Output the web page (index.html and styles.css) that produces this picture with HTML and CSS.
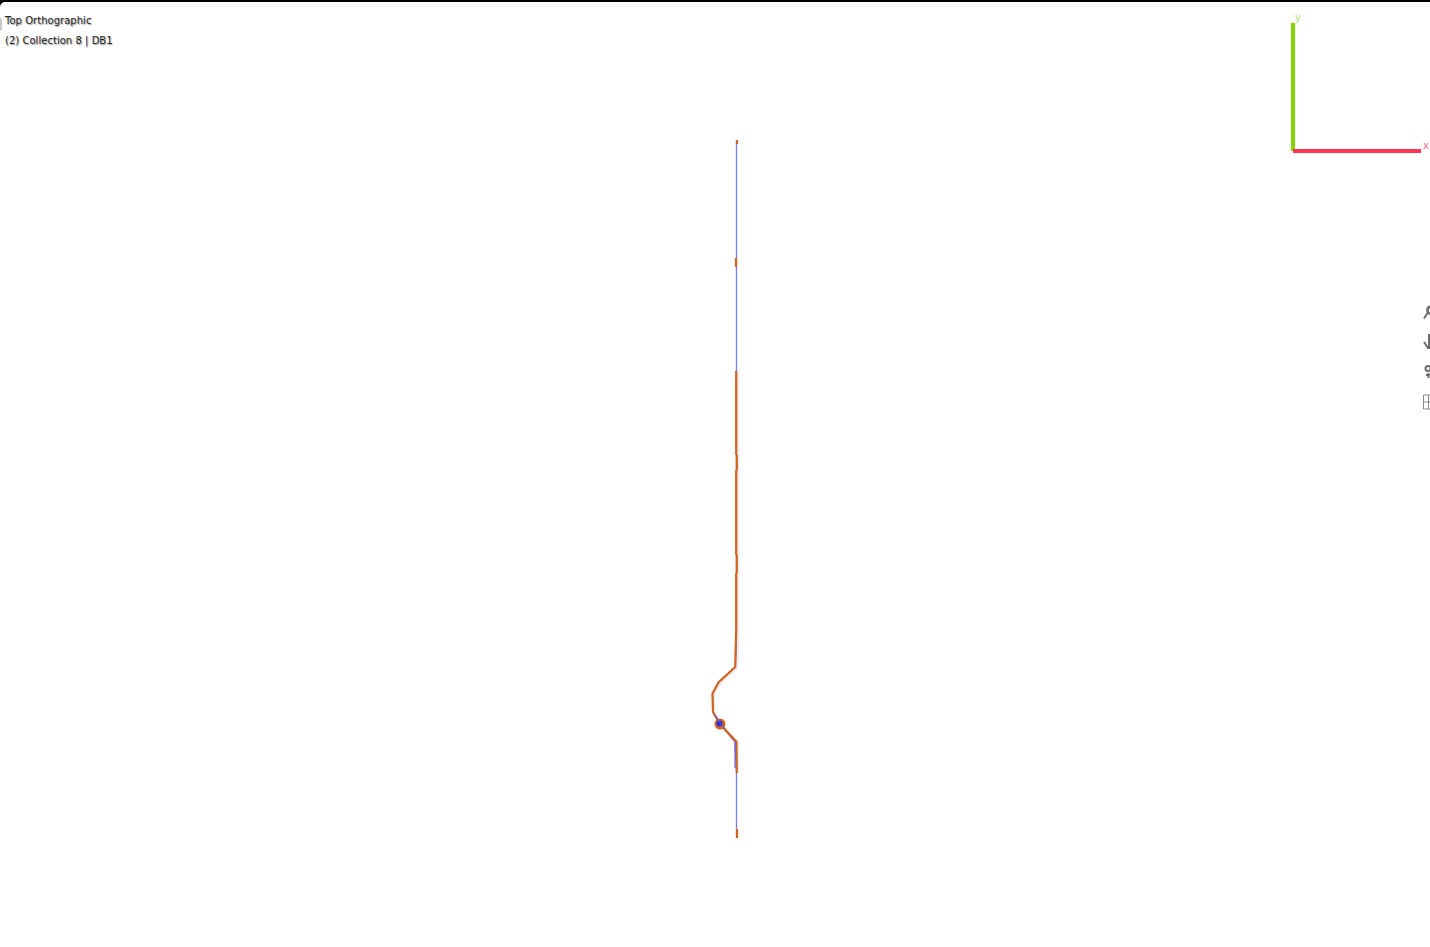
FILE: index.html
```html
<!DOCTYPE html>
<html lang="en">
<head>
<meta charset="utf-8">
<title>Top Orthographic</title>
<link rel="stylesheet" href="styles.css">
</head>
<body>
<main class="window">
  <div class="viewport">
    <header class="info">
      <div class="info-line">Top Orthographic</div>
      <div class="info-line">(2) Collection 8 | DB1</div>
    </header>
    <span class="edge-tab"></span>

    <svg class="scene" width="1430" height="947" viewBox="0 0 1430 947" aria-hidden="true">
      <path class="halo" d="M738.500 371V640L737.500 668L720 684.500L714.500 694V712L722 725L738 742V772"/>
      <path class="wire" d="M736.500 141V640L735.500 667L718.500 682.500L712.500 693.500L713 712L720 724L735 742L736.500 772V836"/>
      <path class="edge" d="M737 140V144"/>
      <path class="edge" d="M736 258V267"/>
      <path class="edge" d="M736.200 371V455M736.800 455V470M736.200 470V555M736.800 555V573M736.200 573V628L735.200 667L718.500 682.500L712.500 693.500L713 712L720 724L736.500 742L736.800 773"/>
      <path class="edge" d="M737 829V838"/>
      <circle class="vertex-ring" cx="720" cy="724" r="5.500"/>
      <circle class="vertex" cx="719.500" cy="723.500" r="3"/>
      <path class="wire-thin" d="M714 714L725 729"/>
      <path class="wire-thin" d="M735 742V768"/>
    </svg>

    <div class="gizmo">
      <span class="axis-label axis-y">y</span>
      <span class="axis axis-green"></span>
      <span class="axis axis-red"></span>
      <span class="axis-label axis-x">x</span>
    </div>

    <div class="tools">
      <svg class="tool" width="7" height="16" viewBox="0 0 7 16"><path d="M1 14.500L4.500 9"/><path class="tool-fill" d="M7 2.500A4 4 0 0 0 4.500 6.500A4 4 0 0 0 7 10"/></svg>
      <svg class="tool" width="7" height="16" viewBox="0 0 7 16"><path d="M6 0V13M1 8L5 14H7"/></svg>
      <svg class="tool" width="7" height="16" viewBox="0 0 7 16"><circle cx="5" cy="4.500" r="2.500"/><path d="M3 11H7M5.500 9V14"/></svg>
      <svg class="tool" width="7" height="16" viewBox="0 0 7 16"><path class="tool-thin" d="M0.500 1H7M0.500 8H7M0.500 15H7M0.500 1V15M5.500 1V15"/></svg>
    </div>
  </div>
</main>
</body>
</html>
```
FILE: styles.css
```css
html, body {
  margin: 0;
  padding: 0;
  background: #000;
}

.window {
  width: 1430px;
  height: 947px;
  padding-top: 2px;
  box-sizing: border-box;
  background: #000;
  overflow: hidden;
}

.viewport {
  position: relative;
  height: 945px;
  background: #fff;
  border-top-left-radius: 5px;
  overflow: hidden;
}

.info {
  position: relative;
  z-index: 2;
  display: flex;
  flex-direction: column;
  gap: 6px;
  padding: 12px 0 0 5px;
  font-family: "DejaVu Sans", sans-serif;
  font-size: 10px;
  line-height: 14px;
  letter-spacing: 0.03px;
  color: #262626;
  text-shadow: 1px 1px 1px rgba(0, 0, 0, 0.4);
}

.edge-tab {
  position: absolute;
  left: 0;
  top: 16px;
  width: 2px;
  height: 13px;
  background: #c9c9c9;
  border-radius: 0 2px 2px 0;
}

.scene {
  position: absolute;
  left: 0;
  top: -2px;
}

.scene path {
  fill: none;
}

.halo {
  stroke: #ececec;
  stroke-width: 1.5;
}

.wire {
  stroke: #7a7aff;
  stroke-width: 1.3;
}

.edge {
  stroke: #d2641c;
  stroke-width: 2.2;
}

.wire-thin {
  stroke: #5555f5;
  stroke-width: 1;
}

.vertex-ring {
  fill: #d2641c;
}

.vertex {
  fill: #2d2de0;
}

.gizmo {
  position: absolute;
  left: 1280px;
  top: 10px;
  width: 150px;
  height: 145px;
}

.axis {
  position: absolute;
  display: block;
}

.axis-green {
  left: 11px;
  top: 11px;
  width: 4px;
  height: 128px;
  background: #85d600;
}

.axis-red {
  left: 13px;
  top: 137px;
  width: 128px;
  height: 4px;
  background: #ff3352;
}

.axis-label {
  position: absolute;
  font-family: "DejaVu Sans", sans-serif;
  font-size: 10px;
  line-height: 12px;
}

.axis-y {
  left: 15px;
  top: 0;
  color: #a6dc6a;
}

.axis-x {
  left: 143px;
  top: 128px;
  color: #ff6a80;
}

.tools {
  position: absolute;
  right: 0;
  top: 302px;
  display: flex;
  flex-direction: column;
  gap: 14px;
}

.tool {
  display: block;
}

.tool path {
  fill: none;
  stroke: #6e6e6e;
  stroke-width: 2;
}

.tool .tool-fill {
  stroke-width: 2.6;
}

.tool circle {
  fill: none;
  stroke: #6e6e6e;
  stroke-width: 2;
}

.tool .tool-thin {
  stroke: #8a8a8a;
  stroke-width: 1;
}
```
